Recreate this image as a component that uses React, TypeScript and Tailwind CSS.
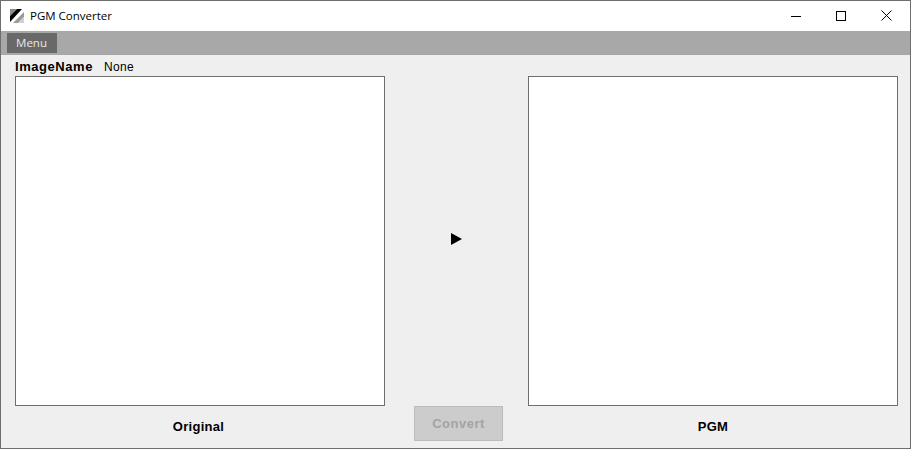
export default function App() {
  return (
    <div className="w-[911px] h-[449px] flex flex-col border border-[#6e6e6e] bg-[#efefef] overflow-hidden font-['Liberation_Sans',sans-serif] text-black">
      <div className="h-[30px] shrink-0 bg-white flex items-center">
        <svg width="14" height="14" viewBox="0 0 14 14" className="ml-[9px] mr-[6px] mb-[1px]">
          <rect width="14" height="14" fill="#fff" />
          <polygon points="0,0 7,0 0,7" fill="#8c8c8c" />
          <polygon points="7,0 12,0 0,13 0,7" fill="#000" />
          <polygon points="14,3 14,8 8,14 3,14" fill="#9a9a9a" />
          <polygon points="14,8 14,14 8,14" fill="#d0d0d0" />
        </svg>
        <span className="font-['Open_Sans',sans-serif] text-[11.5px] leading-none">PGM Converter</span>
        <div className="ml-auto flex h-full">
          <div className="w-[46px] flex items-center justify-center pb-[1px] pl-[1px]">
            <svg width="10" height="10" viewBox="0 0 10 10"><rect x="0" y="5" width="10" height="1" fill="#000" /></svg>
          </div>
          <div className="w-[46px] flex items-center justify-center pb-[1px]">
            <svg width="10" height="10" viewBox="0 0 10 10"><rect x="0.5" y="0.5" width="9" height="9" fill="none" stroke="#000" /></svg>
          </div>
          <div className="w-[46px] flex items-center justify-center pb-[1px] pr-[1px]">
            <svg width="11" height="11" viewBox="0 0 11 11"><path d="M0.5 0.5L10.5 10.5M10.5 0.5L0.5 10.5" stroke="#000" strokeWidth="1" fill="none" /></svg>
          </div>
        </div>
      </div>
      <div className="h-[24px] shrink-0 bg-[#a8a8a8] flex items-center pl-[6px]">
        <div className="w-[50px] h-[20px] bg-[#696969] text-[#e8e8e8] text-[11.5px] font-['Open_Sans',sans-serif] flex items-center justify-center pr-[1px]">Menu</div>
      </div>
      <div className="flex-1 flex pl-[14px] pr-[12px] min-h-0">
        <div className="w-[370px] flex flex-col">
          <div className="h-[21px] flex items-center pt-[2px] text-[13px] leading-none">
            <span className="font-bold w-[89px] tracking-[0.55px]">ImageName</span>
            <span className="text-[12px] tracking-[0.3px]">None</span>
          </div>
          <div className="h-[330px] bg-white border border-[#6e6e6e]" />
          <div className="flex-1 flex items-center justify-center pr-[3px] text-[13px] font-bold tracking-[0.3px]">Original</div>
        </div>
        <div className="flex-1 flex flex-col items-center">
          <div className="flex-1 flex items-center justify-center pt-[16px]">
            <svg width="11" height="12" viewBox="0 0 11 12"><polygon points="0,0 11,6 0,12" fill="#000" /></svg>
          </div>
          <div className="w-[89px] h-[35px] ml-[4px] mb-[7px] bg-[#cccccc] border border-[#bcbcbc] text-[#a3a3a3] text-[13px] font-bold tracking-[0.5px] flex items-center justify-center">Convert</div>
        </div>
        <div className="w-[370px] flex flex-col">
          <div className="h-[21px]" />
          <div className="h-[330px] bg-white border border-[#6e6e6e]" />
          <div className="flex-1 flex items-center justify-center text-[13px] font-bold tracking-[0.3px]">PGM</div>
        </div>
      </div>
    </div>
  );
}
